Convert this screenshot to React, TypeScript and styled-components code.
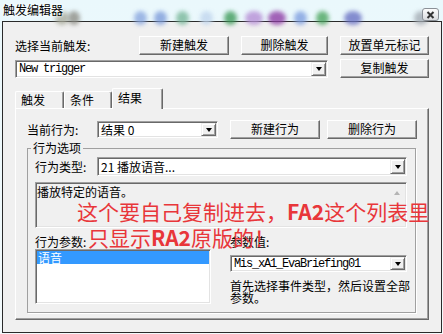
import React from "react";
import styled, { createGlobalStyle } from "styled-components";

const CJK = `"Noto Sans CJK SC", "Noto Sans", sans-serif`;
const MONO = `"Liberation Mono", "DejaVu Sans Mono", monospace`;

const GlobalStyle = createGlobalStyle`
  html, body { margin: 0; padding: 0; background: #eef8fb; }
  body { font-family: ${CJK}; font-size: 12px; color: #000; }
  * { box-sizing: border-box; }
`;

const Screen = styled.div`
  position: relative;
  width: 443px;
  height: 334px;
  overflow: hidden;
  background: linear-gradient(#eaf8fc, #f3fafc);
`;

const TitleBar = styled.div`
  position: relative;
  height: 21px;
  display: flex;
  align-items: flex-start;
  justify-content: space-between;
  padding: 0 4px 0 3px;
`;

const TitleText = styled.div`
  position: relative;
  z-index: 1;
  font-size: 12px;
  line-height: 19px;
  text-shadow: 0 0 3px #fff, 0 0 5px #fff;
`;

const Blob = styled.span<{ $x: number; $c: string; $w?: number }>`
  position: absolute;
  top: 11px;
  left: ${(p) => p.$x}px;
  width: ${(p) => p.$w ?? 13}px;
  height: 14px;
  border-radius: 50%;
  background: ${(p) => p.$c};
  filter: blur(2px);
  opacity: 0.8;
`;

const CloseButton = styled.div`
  position: relative;
  z-index: 1;
  margin-top: 8px;
  width: 17px;
  height: 13px;
  border: 1px solid #8b9097;
  border-radius: 3px;
  background: linear-gradient(#fdfdfd, #d9dbde);
  display: flex;
  align-items: center;
  justify-content: center;
`;

const Frame = styled.div`
  margin-left: 2px;
  width: 440px;
  height: 312px;
  border: 1px solid #2a2a2a;
  background: #f0f0f0;
  padding: 14px 12px 0 12px;
  display: flex;
  flex-direction: column;
`;

const Row = styled.div<{ $mt?: number; $between?: boolean; $gap?: number }>`
  display: flex;
  align-items: center;
  gap: ${(p) => p.$gap ?? 12}px;
  margin-top: ${(p) => p.$mt ?? 0}px;
  justify-content: ${(p) => (p.$between ? "space-between" : "flex-start")};
`;

const Label = styled.div<{ $w?: number }>`
  ${(p) => (p.$w ? `width: ${p.$w}px; flex: none;` : "flex: 1;")}
  font-size: 12px;
  line-height: 14px;
  white-space: nowrap;
`;

const Button = styled.div<{ $w: number; $ml?: number }>`
  flex: none;
  width: ${(p) => p.$w}px;
  height: 19px;
  margin-left: ${(p) => p.$ml ?? 0}px;
  display: flex;
  align-items: center;
  justify-content: center;
  background: #f0f0f0;
  border: 1px solid;
  border-color: #ffffff #696969 #696969 #ffffff;
  box-shadow: inset -1px -1px #a0a0a0;
  font-size: 12px;
  line-height: 14px;
  padding-bottom: 1px;
`;

const ComboBox = styled.div<{ $w: number; $h?: number; $mt?: number }>`
  flex: none;
  width: ${(p) => p.$w}px;
  height: ${(p) => p.$h ?? 18}px;
  margin-top: ${(p) => p.$mt ?? 0}px;
  display: flex;
  align-items: stretch;
  background: #fff;
  border: 1px solid;
  border-color: #a0a0a0 #ffffff #ffffff #a0a0a0;
  box-shadow: inset 1px 1px #696969, inset -1px -1px #e3e3e3;
  padding: 1px;
`;

const ComboText = styled.div<{ $mono?: boolean }>`
  flex: 1;
  display: flex;
  align-items: center;
  padding-left: 2px;
  white-space: nowrap;
  font-family: ${(p) => (p.$mono ? MONO : CJK)};
  font-size: 12px;
  letter-spacing: ${(p) => (p.$mono ? "-1.2px" : "0")};
  line-height: 12px;
`;

const DropButton = styled.div`
  flex: none;
  width: 15px;
  display: flex;
  align-items: center;
  justify-content: center;
  background: #f0f0f0;
  border: 1px solid;
  border-color: #f0f0f0 #696969 #696969 #f0f0f0;
  box-shadow: inset 1px 1px #fff, inset -1px -1px #a0a0a0;
  &::after {
    content: "";
    border-left: 3.5px solid transparent;
    border-right: 3.5px solid transparent;
    border-top: 4px solid #000;
    margin-top: 1px;
  }
`;

const TabStrip = styled.div`
  position: relative;
  z-index: 1;
  display: flex;
  align-items: flex-end;
  height: 20px;
  margin-top: 10px;
`;

const Tab = styled.div<{ $w: number; $active?: boolean }>`
  flex: none;
  width: ${(p) => p.$w}px;
  height: ${(p) => (p.$active ? 21 : 17)}px;
  margin-bottom: ${(p) => (p.$active ? -1 : 0)}px;
  padding: 0 0 ${(p) => (p.$active ? 3 : 1)}px 5px;
  display: flex;
  align-items: center;
  background: #f0f0f0;
  border-top: 1px solid #fff;
  border-left: 1px solid #fff;
  border-right: 1px solid #696969;
  box-shadow: inset -1px 0 #a0a0a0;
  border-radius: 2px 2px 0 0;
  font-size: 12px;
  line-height: 14px;
`;

const TabPanel = styled.div`
  height: 212px;
  border: 1px solid;
  border-color: #ffffff #696969 #696969 #ffffff;
  box-shadow: inset -1px -1px #a0a0a0;
  padding: 11px 9px 0 11px;
  display: flex;
  flex-direction: column;
`;

const GroupBox = styled.fieldset`
  margin: 3px 0 0 0;
  width: 389px;
  min-width: 0;
  border: 1px solid #a0a0a0;
  box-shadow: 1px 1px 0 #fff;
  padding: 3px 8px 8px 7px;
`;

const Legend = styled.legend`
  margin-left: -4px;
  padding: 0 2px;
  font-size: 12px;
  line-height: 12px;
  background: #f0f0f0;
`;

const Sunken = styled.div`
  border: 1px solid;
  border-color: #a0a0a0 #ffffff #ffffff #a0a0a0;
  box-shadow: inset 1px 1px #696969, inset -1px -1px #e3e3e3;
  padding: 1px;
`;

const DescBox = styled(Sunken)`
  margin-top: 6px;
  height: 46px;
  display: flex;
  background: #f0f0f0;
`;

const DescText = styled.div`
  flex: 1;
  padding: 1px 0 0 0;
  font-size: 12px;
  line-height: 14px;
`;

const ScrollBar = styled.div`
  flex: none;
  width: 17px;
  display: flex;
  flex-direction: column;
  justify-content: space-between;
`;

const ScrollArrow = styled.div<{ $down?: boolean }>`
  height: 17px;
  display: flex;
  align-items: center;
  justify-content: center;
  &::after {
    content: "";
    border-left: 3.5px solid transparent;
    border-right: 3.5px solid transparent;
    ${(p) => (p.$down ? "border-top" : "border-bottom")}: 4px solid #b4b4b4;
  }
`;

const ParamGrid = styled.div`
  margin-top: 7px;
  display: grid;
  grid-template-columns: 176px 177px;
  column-gap: 19px;
`;

const Column = styled.div`
  display: flex;
  flex-direction: column;
  align-items: flex-start;
`;

const ListBox = styled(Sunken)`
  width: 176px;
  height: 55px;
  background: #fff;
`;

const ListItem = styled.div<{ $selected?: boolean }>`
  height: 13px;
  padding-left: 1px;
  font-size: 12px;
  line-height: 13px;
  background: ${(p) => (p.$selected ? "#3399ff" : "transparent")};
  color: ${(p) => (p.$selected ? "#fff" : "#000")};
`;

const HelpText = styled.div`
  margin-top: 8px;
  width: 181px;
  font-size: 12px;
  line-height: 12px;
`;

const Annotation = styled.div`
  position: absolute;
  left: 77px;
  top: 198px;
  z-index: 5;
  color: #e8363a;
  font-family: ${CJK};
  font-size: 21px;
  line-height: 26px;
  white-space: nowrap;
  b {
    font-weight: 700;
  }
`;

const AnnoLine = styled.div<{ $indent?: number }>`
  padding-left: ${(p) => p.$indent ?? 0}px;
`;

const blobs: { x: number; c: string; w?: number }[] = [
  { x: 55, c: "#a9ab9c", w: 14 },
  { x: 68, c: "#8e8e86", w: 12 },
  { x: 134, c: "#8aa7df" },
  { x: 154, c: "#7e9ddb" },
  { x: 176, c: "#79b79a" },
  { x: 200, c: "#c1d6ee" },
  { x: 224, c: "#3f9b5a" },
  { x: 245, c: "#b68ed6", w: 18 },
  { x: 268, c: "#8f3da6", w: 18 },
  { x: 294, c: "#7f9fe0" },
  { x: 316, c: "#4aa55e" },
  { x: 344, c: "#6a72c4", w: 18 },
  { x: 414, c: "#a5adb5", w: 14 },
];

export default function App() {
  return (
    <>
      <GlobalStyle />
      <Screen>
        <TitleBar>
          {blobs.map((b, i) => (
            <Blob key={i} $x={b.x} $c={b.c} $w={b.w} />
          ))}
          <TitleText>触发编辑器</TitleText>
          <CloseButton>
            <svg width="9" height="8" viewBox="0 0 9 8">
              <path d="M1.5 1 L7.5 7 M7.5 1 L1.5 7" stroke="#333" strokeWidth="2" />
            </svg>
          </CloseButton>
        </TitleBar>
        <Frame>
          <Row>
            <Label>选择当前触发:</Label>
            <Button $w={90}>新建触发</Button>
            <Button $w={87}>删除触发</Button>
            <Button $w={89}>放置单元标记</Button>
          </Row>
          <Row $mt={4} $between>
            <ComboBox $w={313}>
              <ComboText $mono>New trigger</ComboText>
              <DropButton />
            </ComboBox>
            <Button $w={89}>复制触发</Button>
          </Row>
          <TabStrip>
            <Tab $w={49}>触发</Tab>
            <Tab $w={48}>条件</Tab>
            <Tab $w={51} $active>
              结果
            </Tab>
          </TabStrip>
          <TabPanel>
            <Row $gap={0}>
              <Label $w={70}>当前行为:</Label>
              <ComboBox $w={121} $h={17}>
                <ComboText>结果 0</ComboText>
                <DropButton />
              </ComboBox>
              <Button $w={90} $ml={12}>
                新建行为
              </Button>
              <Button $w={90} $ml={7}>
                删除行为
              </Button>
            </Row>
            <GroupBox>
              <Legend>行为选项</Legend>
              <Row $gap={0}>
                <Label $w={62}>行为类型:</Label>
                <ComboBox $w={310} $h={19}>
                  <ComboText>21 播放语音...</ComboText>
                  <DropButton />
                </ComboBox>
              </Row>
              <DescBox>
                <DescText>播放特定的语音。</DescText>
                <ScrollBar>
                  <ScrollArrow />
                  <ScrollArrow $down />
                </ScrollBar>
              </DescBox>
              <ParamGrid>
                <Column>
                  <Label>行为参数:</Label>
                  <ListBox>
                    <ListItem $selected>语音</ListItem>
                  </ListBox>
                </Column>
                <Column>
                  <Label>参数值:</Label>
                  <ComboBox $w={177} $h={17} $mt={3}>
                    <ComboText $mono>Mis_xA1_EvaBriefing01</ComboText>
                    <DropButton />
                  </ComboBox>
                  <HelpText>首先选择事件类型，然后设置全部参数。</HelpText>
                </Column>
              </ParamGrid>
            </GroupBox>
          </TabPanel>
        </Frame>
        <Annotation>
          <AnnoLine>
            这个要自己复制进去，<b>FA2</b>这个列表里
          </AnnoLine>
          <AnnoLine $indent={11}>
            只显示<b>RA2</b>原版的！
          </AnnoLine>
        </Annotation>
      </Screen>
    </>
  );
}
